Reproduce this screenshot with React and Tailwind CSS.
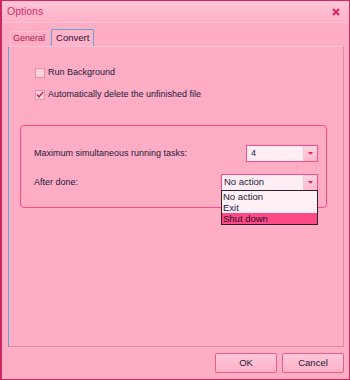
import { useState } from "react";

function CheckBox({ checked, label }) {
  return (
    <div className="flex items-center gap-[3px] h-[12px]">
      <span className="w-[10px] h-[10px] border border-[#e890ac] bg-[#ffd0de] flex items-center justify-center">
        {checked && (
          <svg width="8" height="8" viewBox="0 0 8 8">
            <path d="M1 3.5 L3 6 L7 1" fill="none" stroke="#d01c52" strokeWidth="1.4" />
          </svg>
        )}
      </span>
      <span>{label}</span>
    </div>
  );
}

function Arrow() {
  return (
    <span className="w-[14px] h-full flex items-center justify-center bg-gradient-to-b from-[#ffd6e2] to-[#ffb8cc] border-l border-[#ffc0d2]">
      <svg width="5" height="3" viewBox="0 0 5 3">
        <path d="M0 0 H5 L2.5 3 Z" fill="#e0245c" />
      </svg>
    </span>
  );
}

const options = ["No action", "Exit", "Shut down"];

export default function App() {
  const [tab] = useState("Convert");

  return (
    <div
      className="w-[350px] h-[380px] flex flex-col bg-[#ffacc5] border border-l-2 border-[#cc2862] text-[9px] text-[#1a1a3a] overflow-hidden"
      style={{ fontFamily: '"Liberation Sans", Arial, sans-serif' }}
    >
      <div className="h-[22px] flex items-center justify-between pl-[5px] pr-[9px] bg-gradient-to-b from-[#ffc4d5] to-[#ffb2c9] border-b border-[#ffc6d6]">
        <span className="text-[10.5px] text-[#d82a68]">Options</span>
        <svg width="8" height="8" viewBox="0 0 8 8">
          <path d="M1 1 L7 7 M7 1 L1 7" stroke="#e02060" strokeWidth="2" />
        </svg>
      </div>

      <div className="flex items-end h-[23px] pl-[8px] gap-[4px]">
        <div className="h-[15px] px-[2px] flex items-center text-[#a81e4c] border-t border-l border-[#ffc0d2] rounded-tl-[2px]">
          General
        </div>
        <div className="h-[17px] px-[4px] flex items-center text-[9.5px] text-[#2a1030] bg-[#ffb4ca] border-t border-l border-r border-[#5aa8d4] rounded-t-[2px]">
          {tab}
        </div>
      </div>

      <div className="ml-[6px] mr-[5px] h-[301px] border border-t-[#ffc4d4] border-l-[#5aa8d4] border-r-[#e58aa4] border-b-[#e58aa4] bg-[#ffacc5] flex flex-col">
        <div className="pl-[26px] pt-[20px] flex flex-col gap-[10px]">
          <CheckBox checked={false} label="Run Background" />
          <CheckBox checked label="Automatically delete the unfinished file" />
        </div>

        <div className="ml-[11px] mt-[24px] w-[307px] h-[83px] border border-[#ff4c88] rounded-[4px] pl-[13px] pt-[19px] flex flex-col gap-[12px]">
          <div className="flex items-center justify-between pr-[8px]">
            <span>Maximum simultaneous running tasks:</span>
            <div className="w-[72px] h-[17px] flex items-center justify-between border border-[#ff4c88] bg-[#ffeef3]">
              <span className="pl-[4px]">4</span>
              <Arrow />
            </div>
          </div>
          <div className="flex items-center justify-between pr-[8px]">
            <span>After done:</span>
            <div className="relative w-[97px] h-[17px] flex items-center justify-between border border-[#ff4c88] bg-[#ffeef3]">
              <span className="pl-[2px] text-[9.5px]">No action</span>
              <Arrow />
              <div className="absolute left-[-1px] top-[15px] w-[97px] border border-[#2a2030] bg-[#fff0f5] flex flex-col z-10 text-[9.5px]">
                {options.map((o) => (
                  <span
                    key={o}
                    className={
                      o === "Shut down"
                        ? "h-[11px] leading-[11px] pl-[1px] bg-[#ff4a88] text-[#1c0c1c]"
                        : "h-[11px] leading-[11px] pl-[1px]"
                    }
                  >
                    {o}
                  </span>
                ))}
              </div>
            </div>
          </div>
        </div>
      </div>

      <div className="flex justify-end gap-[5px] pr-[5px] pt-[6px]">
        <button className="w-[62px] h-[20px] border border-[#e8608c] rounded-[2px] bg-gradient-to-b from-[#ffc8d8] to-[#ffb0c8] text-[9.5px] text-[#1a1a3a]">
          OK
        </button>
        <button className="w-[62px] h-[20px] border border-[#e8608c] rounded-[2px] bg-gradient-to-b from-[#ffc8d8] to-[#ffb0c8] text-[9.5px] text-[#1a1a3a]">
          Cancel
        </button>
      </div>
    </div>
  );
}
